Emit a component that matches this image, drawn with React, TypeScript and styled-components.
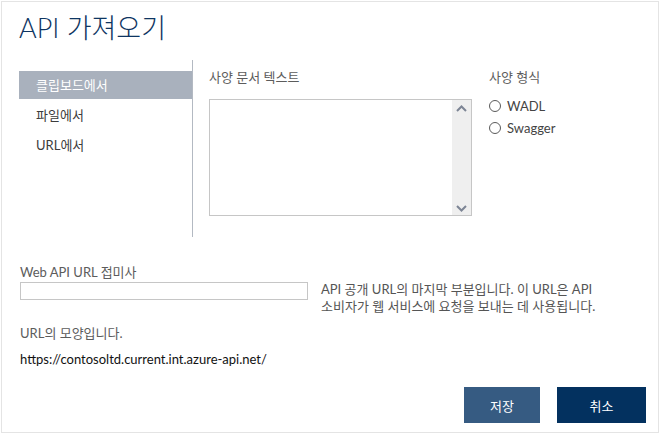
import styled, { createGlobalStyle } from 'styled-components'

const Global = createGlobalStyle`
  html, body {
    margin: 0;
    padding: 0;
    background: #ffffff;
  }
  body {
    font-family: "Segoe UI", "Lato", "Noto Sans CJK KR", sans-serif;
  }
  * {
    box-sizing: border-box;
  }
`

const Page = styled.div`
  width: 661px;
  height: 434px;
  padding: 1px 2px 1px 1px;
`

const Dialog = styled.div`
  width: 100%;
  height: 100%;
  border: 1px solid #e4e4e4;
  padding: 6px 12px 0 17px;
  display: flex;
  flex-direction: column;
`

const Title = styled.h1`
  margin: 0;
  font-weight: 300;
  font-size: 27px;
  line-height: 40px;
  color: #0e3562;
`

const Top = styled.div`
  display: flex;
  margin-top: 12px;
  height: 177px;
`

const Nav = styled.div`
  width: 174px;
  border-right: 1px solid #b3b9c2;
  padding-top: 11px;
  display: flex;
  flex-direction: column;
`

const NavItem = styled.div<{ active?: boolean }>`
  height: 28px;
  line-height: 28px;
  padding-left: 17px;
  font-size: 13px;
  color: ${({ active }) => (active ? '#ffffff' : '#3c3c3c')};
  background: ${({ active }) => (active ? '#a9b1bd' : 'transparent')};
  margin-bottom: 2px;
`

const SpecCol = styled.div`
  width: 279px;
  padding-left: 16px;
  padding-top: 8px;
`

const Label = styled.div`
  font-size: 13px;
  color: #5c5c5c;
  line-height: 18px;
`

const TextBox = styled.div`
  margin-top: 13px;
  width: 263px;
  height: 117px;
  border: 1px solid #c6c6c6;
  display: flex;
  justify-content: flex-end;
`

const Scroll = styled.div`
  width: 19px;
  height: 100%;
  background: #efefef;
  display: flex;
  flex-direction: column;
  justify-content: space-between;
  align-items: center;
  padding: 5px 0 3px;
`

const FormatCol = styled.div`
  padding-left: 17px;
  padding-top: 8px;
`

const RadioList = styled.div`
  margin-top: 11px;
  display: flex;
  flex-direction: column;
  gap: 4px;
`

const RadioRow = styled.label`
  display: flex;
  align-items: center;
  gap: 6px;
  font-size: 13px;
  color: #444444;
  line-height: 18px;
`

const Circle = styled.span`
  width: 12px;
  height: 12px;
  border-radius: 50%;
  border: 1px solid #5a5a5a;
`

const Bottom = styled.div`
  margin-top: 26px;
  padding-left: 1px;
`

const InputRow = styled.div`
  display: flex;
  align-items: flex-start;
  margin-top: 0;
`

const Input = styled.div`
  width: 288px;
  height: 18px;
  border: 1px solid #c6c6c6;
  margin-top: 1px;
`

const Help = styled.div`
  margin-left: 13px;
  font-size: 13px;
  line-height: 17px;
  color: #555555;
  width: 285px;
`

const Shape = styled(Label)`
  margin-top: 9px;
`

const Url = styled.div`
  margin-top: 8px;
  font-size: 13px;
  color: #111111;
  line-height: 18px;
`

const Actions = styled.div`
  display: flex;
  justify-content: flex-end;
  gap: 17px;
  margin-top: 19px;
`

const Button = styled.button<{ primary?: boolean }>`
  height: 36px;
  width: ${({ primary }) => (primary ? '76px' : '89px')};
  border: none;
  color: #ffffff;
  font-family: inherit;
  font-size: 13px;
  background: ${({ primary }) => (primary ? '#365b82' : '#03315f')};
`

const Chevron = ({ up }: { up?: boolean }) => (
  <svg width="11" height="7" viewBox="0 0 11 7">
    <path
      d={up ? 'M1 6 L5.5 1.5 L10 6' : 'M1 1 L5.5 5.5 L10 1'}
      stroke="#7d8595"
      strokeWidth="2"
      fill="none"
    />
  </svg>
)

export default function App() {
  return (
    <Page>
      <Global />
      <Dialog>
        <Title>API 가져오기</Title>
        <Top>
          <Nav>
            <NavItem active>클립보드에서</NavItem>
            <NavItem>파일에서</NavItem>
            <NavItem>URL에서</NavItem>
          </Nav>
          <SpecCol>
            <Label>사양 문서 텍스트</Label>
            <TextBox>
              <Scroll>
                <Chevron up />
                <Chevron />
              </Scroll>
            </TextBox>
          </SpecCol>
          <FormatCol>
            <Label>사양 형식</Label>
            <RadioList>
              <RadioRow>
                <Circle />
                WADL
              </RadioRow>
              <RadioRow>
                <Circle />
                Swagger
              </RadioRow>
            </RadioList>
          </FormatCol>
        </Top>
        <Bottom>
          <Label>Web API URL 접미사</Label>
          <InputRow>
            <Input />
            <Help>
              API 공개 URL의 마지막 부분입니다. 이 URL은 API 소비자가 웹 서비스에 요청을 보내는 데 사용됩니다.
            </Help>
          </InputRow>
          <Shape>URL의 모양입니다.</Shape>
          <Url>https://contosoltd.current.int.azure-api.net/</Url>
        </Bottom>
        <Actions>
          <Button primary>저장</Button>
          <Button>취소</Button>
        </Actions>
      </Dialog>
    </Page>
  )
}
